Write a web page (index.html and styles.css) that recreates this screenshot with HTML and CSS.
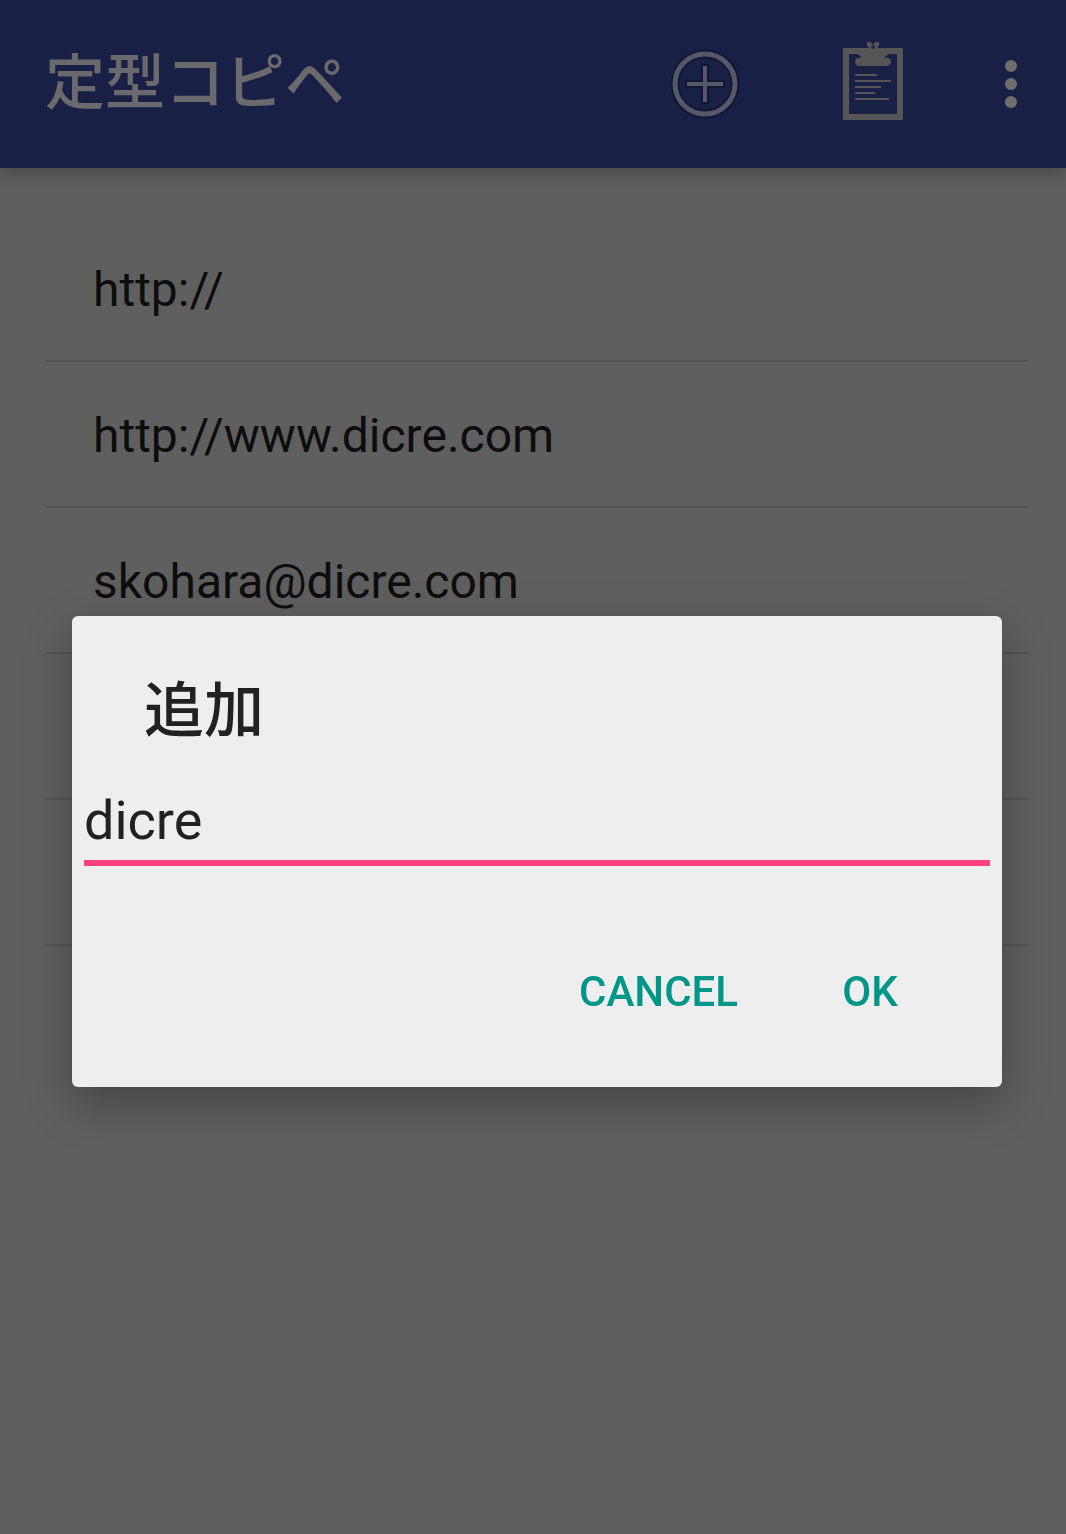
FILE: index.html
```
<!DOCTYPE html>
<html lang="ja">
<head>
    <meta charset="UTF-8">
    <meta name="viewport" content="width=device-width, initial-scale=1">
    <title>定型コピペ</title>
    <link rel="stylesheet" href="styles.css">
</head>
<body>
    <header class="toolbar">
        <h1 class="toolbar-title">定型コピペ</h1>
        <button class="tool" type="button" aria-label="追加">
            <svg width="110" height="110" viewBox="0 0 110 110" fill="none">
                <circle cx="55" cy="55" r="30" stroke="#131732" stroke-width="9"/>
                <path d="M55 35v40M35 55h40" stroke="#131732" stroke-width="8"/>
                <circle cx="55" cy="55" r="30" stroke="#555868" stroke-width="5"/>
                <path d="M55 37v36M37 55h36" stroke="#555868" stroke-width="4"/>
            </svg>
        </button>
        <button class="tool" type="button" aria-label="クリップボード">
            <svg width="110" height="110" viewBox="-2 -1 110 110" fill="none">
                <rect x="26" y="21" width="54" height="66" stroke="#555" stroke-width="6"/>
                <path fill="#555" d="M47 12h4l2 3 2-3h4v4l-2 2q1 2 4 3h7v4q-3 0-3 3 5-1 6 3 0 5-5 5H40q-5 0-5-5 1-4 6-3 0-3-3-3v-4h7q3-1 4-3l-2-2z"/>
                <circle cx="53" cy="17" r="2" fill="#22274a"/>
                <path d="M35 45h22M35 51h36M35 57h26M35 63h20M35 69h34" stroke="#555" stroke-width="2"/>
            </svg>
        </button>
        <button class="tool more" type="button" aria-label="メニュー">
            <svg width="12" height="48" viewBox="0 0 12 48" fill="#6e6e6c">
                <circle cx="6" cy="6" r="6"/>
                <circle cx="6" cy="24" r="6"/>
                <circle cx="6" cy="42" r="6"/>
            </svg>
        </button>
    </header>

    <ul class="list">
        <li>http://</li>
        <li>http://www.dicre.com</li>
        <li>skohara@dicre.com</li>
        <li></li>
        <li></li>
    </ul>

    <!-- 追加ダイアログ -->
    <div class="overlay">
        <form class="dialog" role="dialog" aria-labelledby="dialog-title">
            <h2 class="dialog-title"><label id="dialog-title" for="phrase">追加</label></h2>
            <input class="field" id="phrase" type="text" value="dicre">
            <div class="actions">
                <button class="action" type="button">CANCEL</button>
                <button class="action" type="submit">OK</button>
            </div>
        </form>
    </div>
</body>
</html>
```
FILE: styles.css
```
* {
    margin: 0;
    padding: 0;
    box-sizing: border-box;
}
body {
    min-height: 100vh;
    background: #5f5f5f;
    color: #0d0d0d;
    font-family: Roboto, "Noto Sans CJK JP", sans-serif;
}
button {
    border: 0;
    background: none;
    font-family: inherit;
    cursor: pointer;
}

/* toolbar */
.toolbar {
    display: flex;
    align-items: center;
    gap: 24px;
    height: 168px;
    padding: 0 13px 0 45px;
    background: #192046;
    box-shadow: 0 6px 16px rgba(0, 0, 0, 0.25);
}
.toolbar-title {
    flex: 1;
    color: #6a6a6c;
    font-size: 60px;
    font-weight: 500;
    line-height: 80px;
    white-space: nowrap;
}
.tool {
    display: flex;
    align-items: center;
    justify-content: center;
    width: 144px;
    height: 144px;
}
.more {width: 84px;}

/* list */
.list {
    list-style: none;
    padding: 48px 37px 48px 45px;
}
.list li {
    min-height: 146px;
    padding: 46px 48px 42px;
    border-bottom: 2px solid #535353;
    font-size: 48px;
    line-height: 56px;
}

/* dialog */
.overlay {
    position: fixed;
    top: 168px;
    right: 0;
    bottom: 0;
    left: 0;
    display: flex;
    align-items: center;
    padding: 0 64px 0 72px;
}
.dialog {
    flex: 1;
    padding: 56px 12px 41px;
    border-radius: 6px;
    background: #eee;
    color: #212121;
    box-shadow: 0 16px 48px rgba(0, 0, 0, 0.28);
}
.dialog-title {
    padding: 0 60px;
    font-size: 60px;
    font-weight: 500;
    line-height: 80px;
}
.field {
    display: block;
    width: 100%;
    margin-top: 22px;
    padding: 16px 0 8px;
    border: 0;
    border-bottom: 6px solid #ff4081;
    outline: 0;
    background: none;
    color: inherit;
    font-family: inherit;
    font-size: 54px;
    line-height: 62px;
}
.actions {
    display: flex;
    justify-content: flex-end;
    gap: 12px;
    margin-top: 72px;
    padding: 0 24px;
}
.action {
    min-width: 192px;
    height: 108px;
    padding: 0 24px;
    color: #009688;
    font-size: 42px;
    font-weight: 500;
}
```
